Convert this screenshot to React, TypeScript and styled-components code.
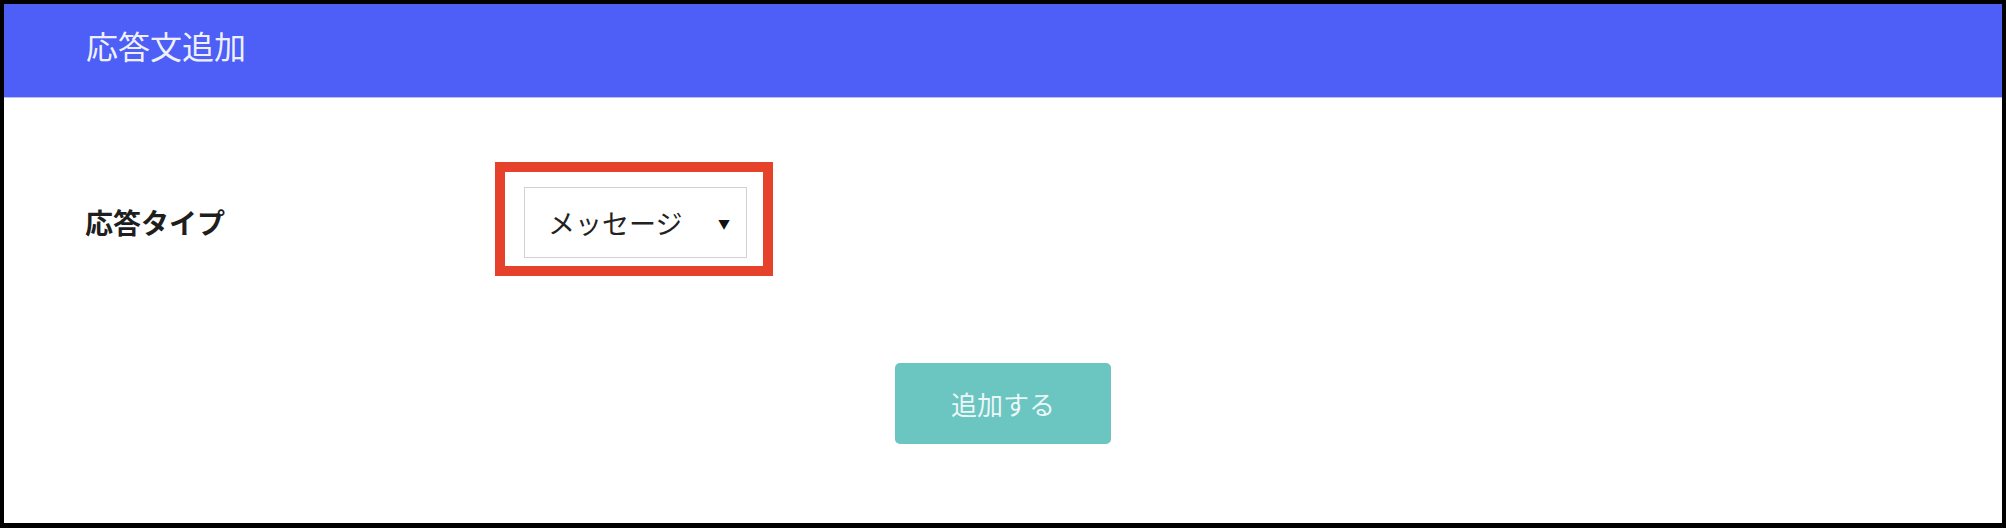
import styled, { createGlobalStyle } from "styled-components";

const GlobalStyle = createGlobalStyle`
  html, body {
    margin: 0;
    padding: 0;
    background: #000;
  }
  body {
    font-family: "Noto Sans CJK JP", "Noto Sans", sans-serif;
  }
`

const Frame = styled.div`
  margin: 4px 4px 5px 4px;
  height: 519px;
  background: #fff;
  display: flex;
  flex-direction: column;
`
const Header = styled.header`
  height: 94px;
  border-bottom: 1px solid #b9c0fb;
  background: #4e5ff7;
  display: flex;
  align-items: center;
  padding: 0 0 12px 82px;
  box-sizing: border-box;
`
const Title = styled.h1`
  margin: 0;
  font-size: 32px;
  font-weight: 400;
  line-height: 1;
  color: rgba(255, 255, 255, 0.92);
`
const Body = styled.main`
  flex: 1;
  display: flex;
  flex-direction: column;
  padding-top: 64px;
`
const Row = styled.div`
  display: flex;
  align-items: center;
  padding-left: 81px;
`
const Label = styled.label`
  width: 410px;
  font-size: 28px;
  font-weight: 700;
  color: #1e1e1e;
  padding-top: 6px;
`
const Highlight = styled.div`
  border: 10px solid #e6412b;
  padding: 15px 16px 8px 19px;
`
const Select = styled.div`
  width: 223px;
  height: 71px;
  box-sizing: border-box;
  border: 1px solid #d2d2d2;
  display: flex;
  align-items: center;
  justify-content: space-between;
  padding: 0 16px 0 23px;
  font-size: 27px;
  color: #222;
`
const Caret = styled.span`
  font-size: 12px;
  color: #111;
  padding-top: 2px;
`
const Actions = styled.div`
  display: flex;
  justify-content: center;
  margin-top: 87px;
`
const Button = styled.button`
  width: 216px;
  height: 81px;
  border: none;
  border-radius: 5px;
  background: #6bc5c1;
  color: rgba(255, 255, 255, 0.88);
  font-family: inherit;
  font-size: 26px;
  cursor: pointer;
`

function App() {
  return (
    <>
      <GlobalStyle />
      <Frame>
        <Header>
          <Title>応答文追加</Title>
        </Header>
        <Body>
          <Row>
            <Label>応答タイプ</Label>
            <Highlight>
              <Select>
                メッセージ
                <Caret>▼</Caret>
              </Select>
            </Highlight>
          </Row>
          <Actions>
            <Button>追加する</Button>
          </Actions>
        </Body>
      </Frame>
    </>
  )
}

export default App;
